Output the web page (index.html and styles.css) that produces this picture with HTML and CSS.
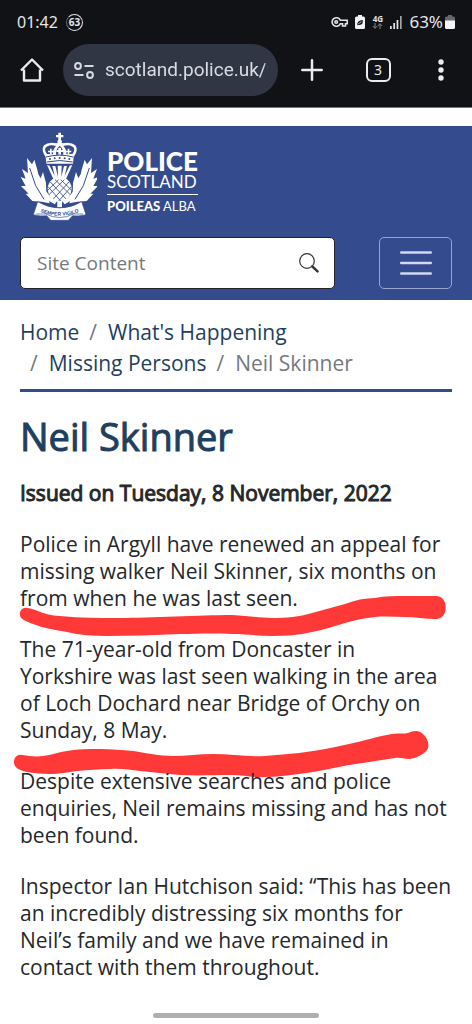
FILE: index.html
```
<!DOCTYPE html>
<html lang="en">
<head>
<meta charset="utf-8">
<meta name="viewport" content="width=device-width, initial-scale=1">
<title>Neil Skinner - Police Scotland</title>
<link rel="stylesheet" href="styles.css">
</head>
<body>
<div class="browser">
  <div class="status">
    <span class="clock">01:42</span>
    <span class="charge">63</span>
    <span class="status-icons">
      <svg width="17" height="12" viewBox="0 0 17 12" fill="none" stroke="#e6e6e8" stroke-width="1.600"><path d="M9.3 4.2A4.3 4.3 0 1 0 9.3 7.8H11.5V10H14.5V7.8H16.2V4.2Z"/><circle cx="5.2" cy="6" r="1.3"/></svg>
      <svg width="10" height="14" viewBox="0 0 10 14"><path d="M3 0H7V1.5H8.5Q10 1.5 10 3V12.500Q10 14 8.500 14H1.500Q0 14 0 12.500V3Q0 1.500 1.500 1.500H3Z" fill="#f2f2f4"/><path d="M2.300 10.500Q1.500 5.500 7.700 5Q8.500 10.500 3.500 9.800" fill="#15161a"/><path d="M3.500 9Q4.500 7.500 6.300 6.800" stroke="#f2f2f4" fill="none" stroke-width=".8"/></svg>
      <span class="network"><span>4G</span>
        <svg width="11" height="6" viewBox="0 0 11 6" fill="none" stroke="#85868a" stroke-width="1"><path d="M3 0V5.200M.8 3 3 5.300 5.200 3M8 6V.8M5.800 3 8 .7 10.200 3"/></svg>
      </span>
      <svg width="12" height="13" viewBox="0 0 12 13" fill="#e6e6e8"><rect y="10" width="1.700" height="3"/><rect x="3.300" y="7" width="1.700" height="6"/><rect x="6.600" y="4" width="1.700" height="9"/><rect x="10" width="1.700" height="13" fill="#a2a3a7"/></svg>
    </span>
    <span class="percent">63%</span>
    <svg width="10" height="14" viewBox="0 0 10 14"><path d="M3 0H7V1.500H8.500Q10 1.500 10 3V6H0V3Q0 1.500 1.500 1.500H3Z" fill="#66676b"/><path d="M0 5.500H10V12.500Q10 14 8.500 14H1.500Q0 14 0 12.500Z" fill="#f4f4f6"/></svg>
  </div>
  <div class="toolbar">
    <button class="tool" aria-label="Home page"><svg width="24" height="24" viewBox="0 0 24 24" fill="none" stroke="#ececf0" stroke-width="2.400" stroke-linejoin="round"><path d="M4 11.500V22.500H20V11.500M1 12.500 12 1.500 23 12.500"/></svg></button>
    <label class="address">
      <svg width="20" height="17" viewBox="0 0 20 17" fill="none" stroke="#d5d9e2" stroke-width="2"><circle cx="4" cy="4" r="2.900"/><path d="M10.500 4H19.500M.5 13H9.500"/><circle cx="16" cy="13" r="2.900"/></svg>
      <input type="text" value="scotland.police.uk/what" aria-label="Address">
    </label>
    <button class="tool" aria-label="New tab"><svg width="22" height="22" viewBox="0 0 22 22" stroke="#ececf0" stroke-width="2.500" stroke-linecap="round"><path d="M11 1.300V20.700M1.300 11H20.700"/></svg></button>
    <button class="tool" aria-label="Tabs"><span class="tabs">3</span></button>
    <button class="tool" aria-label="Menu"><svg width="6" height="22" viewBox="0 0 6 22" fill="#ececf0"><circle cx="3" cy="3" r="2.700"/><circle cx="3" cy="11" r="2.700"/><circle cx="3" cy="19" r="2.700"/></svg></button>
  </div>
</div>

<header class="masthead">
  <a class="brand" href="#" aria-label="Police Scotland">
    <svg class="crest" width="77" height="89" viewBox="29 37 231 267" fill="#fff">
      <!-- laurel leaves -->
      <path d="M50 115 65 134 72 120 81 150 84 164 91 176 98 157 107 190 108 220 118 251 94 246 66 244 46 222 55 222 32 199 46 199 31 172 46 177 35 148 53 160Z"/>
      <path d="M245 115 230 134 223 120 214 150 211 164 204 176 197 157 188 190 187 220 177 251 201 246 229 244 249 222 240 222 263 199 249 199 264 172 249 177 260 148 242 160Z"/>
      <path d="M58 145 76 198 101 239M237 145 219 198 194 239" fill="none" stroke="#344b8d" stroke-width="3"/>
      <!-- crown -->
      <path d="M144 39H152V46H159V53H152V61Q158 66 152 70H144Q138 66 144 61V53H137V46H144Z"/>
      <path d="M106 112Q91 91 101 77Q113 66 139 71L148 65 157 71Q183 66 195 77Q205 91 190 112L188 132H108Z"/>
      <path d="M110 103Q99 88 109 81Q121 74 137 79Q126 91 128 104ZM186 103Q197 88 187 81Q175 74 159 79Q170 91 168 104ZM137 105Q136 88 148 78Q160 88 159 105Z" fill="#344b8d"/>
      <path d="M113 93H119V87H124V93H130V98H124V104H119V98H113ZM144 91V84H152V91H158V97H152V105H144V97H138V91ZM166 93H172V87H177V93H183V98H177V104H172V98H166Z"/>
      <path d="M107 112Q148 101 189 112M109 127Q148 118 187 127" fill="none" stroke="#344b8d" stroke-width="3"/>
      <g fill="#344b8d"><circle cx="119" cy="118" r="3"/><circle cx="133" cy="116" r="3"/><circle cx="148" cy="115" r="3"/><circle cx="163" cy="116" r="3"/><circle cx="177" cy="118" r="3"/></g>
      <!-- thistle -->
      <path d="M110 136 118 138 133 169 126 139 135 139 143 172 142 138H154L153 172 161 139H170L163 169 178 138 186 136 167 178H129Z"/>
      <path d="M127 178H169Q184 190 184 207Q182 235 160 246H136Q114 235 112 207Q112 190 127 178Z"/>
      <path d="M120 187 168 239M113 201 153 246M134 180 181 226M151 180 184 212M176 187 128 239M183 201 143 246M162 180 115 226M145 180 112 212" fill="none" stroke="#344b8d" stroke-width="2.500"/>
      <path d="M141 244H155V263H141ZM104 210 122 234 139 246 133 254 110 240ZM192 210 174 234 157 246 163 254 186 240Z"/>
      <!-- motto ribbon -->
      <path d="M82 246Q148 284 214 246L227 285Q202 291 187 288L174 302H121L109 288Q90 291 69 285Z" stroke="#344b8d" stroke-width="2"/>
      <path d="M78 283 106 283Q148 304 190 283L218 283" fill="none" stroke="#344b8d" stroke-width="2"/>
      <path id="motto" d="M79 272Q148 304 217 272" fill="none"/>
      <text class="motto" text-anchor="middle"><textPath href="#motto" startOffset="50%">SEMPER VIGILO</textPath></text>
    </svg>
    <span class="wordmark">
      <strong>POLICE</strong>
      <span class="country">SCOTLAND</span>
      <span class="gaelic"><b>POILEAS</b> ALBA</span>
    </span>
  </a>
  <form class="controls">
    <div class="search">
      <input type="search" placeholder="Site Content" aria-label="Site Content">
      <button type="button" aria-label="Search"><svg width="20" height="20" viewBox="0 0 20 20" fill="none" stroke="#303438"><circle cx="8" cy="8" r="7.300" stroke-width="1.200"/><path d="m13.300 13.300 5.200 5" stroke-width="2.500" stroke-linecap="round"/></svg></button>
    </div>
    <button class="menu" type="button" aria-label="Toggle navigation"><svg width="32" height="26" viewBox="0 0 32 26" stroke="#d0d8f2" stroke-width="2.400" stroke-linecap="round"><path d="M1.200 2.500H30.800M1.200 13H30.800M1.200 23.500H30.800"/></svg></button>
  </form>
</header>

<main>
  <nav aria-label="Breadcrumb">
    <ol class="crumbs">
      <li><a href="#">Home</a></li>
      <li><a href="#">What's Happening</a></li>
      <li><a href="#">Missing Persons</a></li>
      <li aria-current="page">Neil Skinner</li>
    </ol>
  </nav>
  <h1>Neil Skinner</h1>
  <p class="issued">Issued on Tuesday, 8 November, 2022</p>
  <div class="story">
    <p>Police in Argyll have renewed an appeal for missing walker Neil Skinner, six months on from when he was last seen.</p>
    <p>The 71-year-old from Doncaster in Yorkshire was last seen walking in the area of Loch Dochard near Bridge of Orchy on Sunday, 8 May.</p>
    <p>Despite extensive searches and police enquiries, Neil remains missing and has not been found.</p>
    <p>Inspector Ian Hutchison said: “This has been an incredibly distressing six months for Neil’s family and we have remained in contact with them throughout.</p>
    <svg class="marks" width="472" height="260" viewBox="0 529 472 260" fill="#ff3838" aria-hidden="true">
      <path d="M27 606C37 607 42 613 60 614C80 616 100 616 120 616C150 616 200 613 232 613C250 614 260 616 272 616C287 616 299 615 312 611C323 608 334 605 345 602C355 598 365 596 375 596C385 594 395 594 405 594L436 594C449 594 449 617 436 617C425 617 415 615 405 615C395 615 385 614 375 615C365 616 355 618 345 621C334 624 323 628 312 630C299 633 285 634 272 634C258 634 246 632 232 632C210 631 195 632 180 632C155 633 130 634 107 634C93 634 80 633 67 630C55 628 43 626 33 622C26 619 20 617 20 613C19 609 23 605 27 606Z"/>
      <path d="M22 753C29 754 36 755 43 754C52 753 59 750 67 749C78 747 89 747 100 747C111 747 122 748 133 749C147 751 159 754 173 754C187 754 199 752 213 752C230 752 248 755 265 754C277 753 288 752 299 751C316 749 332 746 349 742C364 739 378 734 392 732C400 731 405 732 408 731C414 728 420 728 424 733C428 737 430 744 427 748C423 753 416 756 410 757C405 757 400 755 395 756C379 758 365 761 349 763C332 766 316 770 299 772C288 773 277 775 265 775C254 776 243 773 232 773C215 773 197 774 180 773C166 772 153 770 140 769C130 768 120 766 110 767C99 767 88 768 77 769C68 770 59 772 50 772C42 772 34 771 27 770C18 768 14 765 14 760C14 755 18 752 22 753Z"/>
    </svg>
  </div>
</main>
<div class="gesture"></div>
</body>
</html>
```

FILE: styles.css
```
* { box-sizing: border-box; }
body {
  margin: 0;
  background: #fff;
  color: #25282b;
  font: 21px/27px "Open Sans", sans-serif;
}
button { border: 0; padding: 0; background: none; cursor: pointer; }
svg { display: block; flex: none; }
a { color: #1f3f5e; text-decoration: none; }

.browser {
  background: #111216;
  border-bottom: 1px solid #77787c;
  padding-bottom: 11px;
}
.status {
  display: flex;
  align-items: center;
  height: 44px;
  padding: 0 17px;
  color: #e6e6e8;
  font: 16px/20px "Noto Sans", sans-serif;
}
.charge {
  width: 17px;
  height: 17px;
  margin-left: 8px;
  border: 1px solid #e6e6e8;
  border-left-color: #66676b;
  border-radius: 50%;
  font: bold 10px/15px "Noto Sans", sans-serif;
  text-align: center;
}
.status-icons { display: flex; align-items: center; gap: 7px; margin-left: auto; }
.network { display: grid; justify-items: center; font: bold 8px/8px "Noto Sans", sans-serif; }
.percent { margin: 0 2px 0 7px; font-size: 17px; }

.toolbar {
  display: grid;
  grid-template-columns: 63px minmax(0, 1fr) 68px 64px 62px;
  align-items: center;
  height: 52px;
}
.tool { display: grid; place-items: center; height: 52px; }
.address {
  display: flex;
  align-items: center;
  gap: 11px;
  height: 52px;
  padding: 0 10px 0 11px;
  border-radius: 26px;
  background: #303643;
}
.address input {
  flex: 1;
  min-width: 0;
  padding: 0;
  border: 0;
  background: none;
  color: #d9dce4;
  font: 19px/28px Roboto, sans-serif;
  mask-image: linear-gradient(to left, transparent, #000 4px);
}
.tabs {
  width: 25px;
  height: 24px;
  border: 2px solid #ececf0;
  border-radius: 6px;
  color: #ececf0;
  font: 14px/20px "Noto Sans", sans-serif;
}

.masthead {
  margin-top: 18px;
  padding: 6px 20px 11px;
  background: #344b8d;
}
.brand { display: flex; align-items: flex-start; gap: 10px; color: #fff; }
.motto { fill: #344b8d; font: bold 15px "Liberation Sans", sans-serif; }
.wordmark {
  display: grid;
  padding-top: 17px;
  font-family: Lato, sans-serif;
}
.wordmark strong { font-size: 26px; font-weight: 900; line-height: 24px; }
.country { font-size: 17px; line-height: 17px; }
.gaelic {
  margin-top: 4px;
  padding-top: 4px;
  border-top: 1px solid #fff;
  font-size: 13px;
  line-height: 14px;
}
.gaelic b { font-weight: 900; }
.controls {
  display: flex;
  justify-content: space-between;
  gap: 44px;
  margin-top: 16px;
}
.search {
  display: flex;
  flex: 1;
  min-width: 0;
  height: 52px;
  border: 1px solid #212529;
  border-radius: 5px;
  background: #fff;
}
.search input {
  flex: 1;
  min-width: 0;
  padding: 0 16px;
  border: 0;
  background: none;
  font: 19px/28px "Open Sans", sans-serif;
}
.search input::placeholder { color: #75797d; opacity: 1; }
.search button { display: grid; place-items: center; width: 50px; }
.menu {
  display: grid;
  flex: none;
  place-items: center;
  width: 73px;
  border: 1px solid #97a5cf;
  border-radius: 5px;
}

main { padding: 17px 20px 0; }
.crumbs {
  display: flex;
  flex-wrap: wrap;
  margin: 0;
  padding: 0 0 10px;
  border-bottom: 3px solid #344b8d;
  color: #75797d;
  line-height: 31px;
  list-style: none;
}
.crumbs li + li { padding-left: 10px; }
.crumbs li + li::before { content: "/"; padding-right: 11px; }
h1 {
  margin: 19px 0 0;
  color: #1f3f5e;
  font-size: 38px;
  font-weight: 400;
  line-height: 50px;
  -webkit-text-stroke: 1px;
}
p { margin: 0 0 24px; }
.issued { margin-top: 19px; -webkit-text-stroke: 1px; }
.story { position: relative; z-index: 0; }
.marks { position: absolute; z-index: -1; top: 0; left: -20px; }
.gesture {
  width: 35%;
  height: 5px;
  margin: 32px auto 5px;
  border-radius: 3px;
  background: #b0b0b0;
}
```
